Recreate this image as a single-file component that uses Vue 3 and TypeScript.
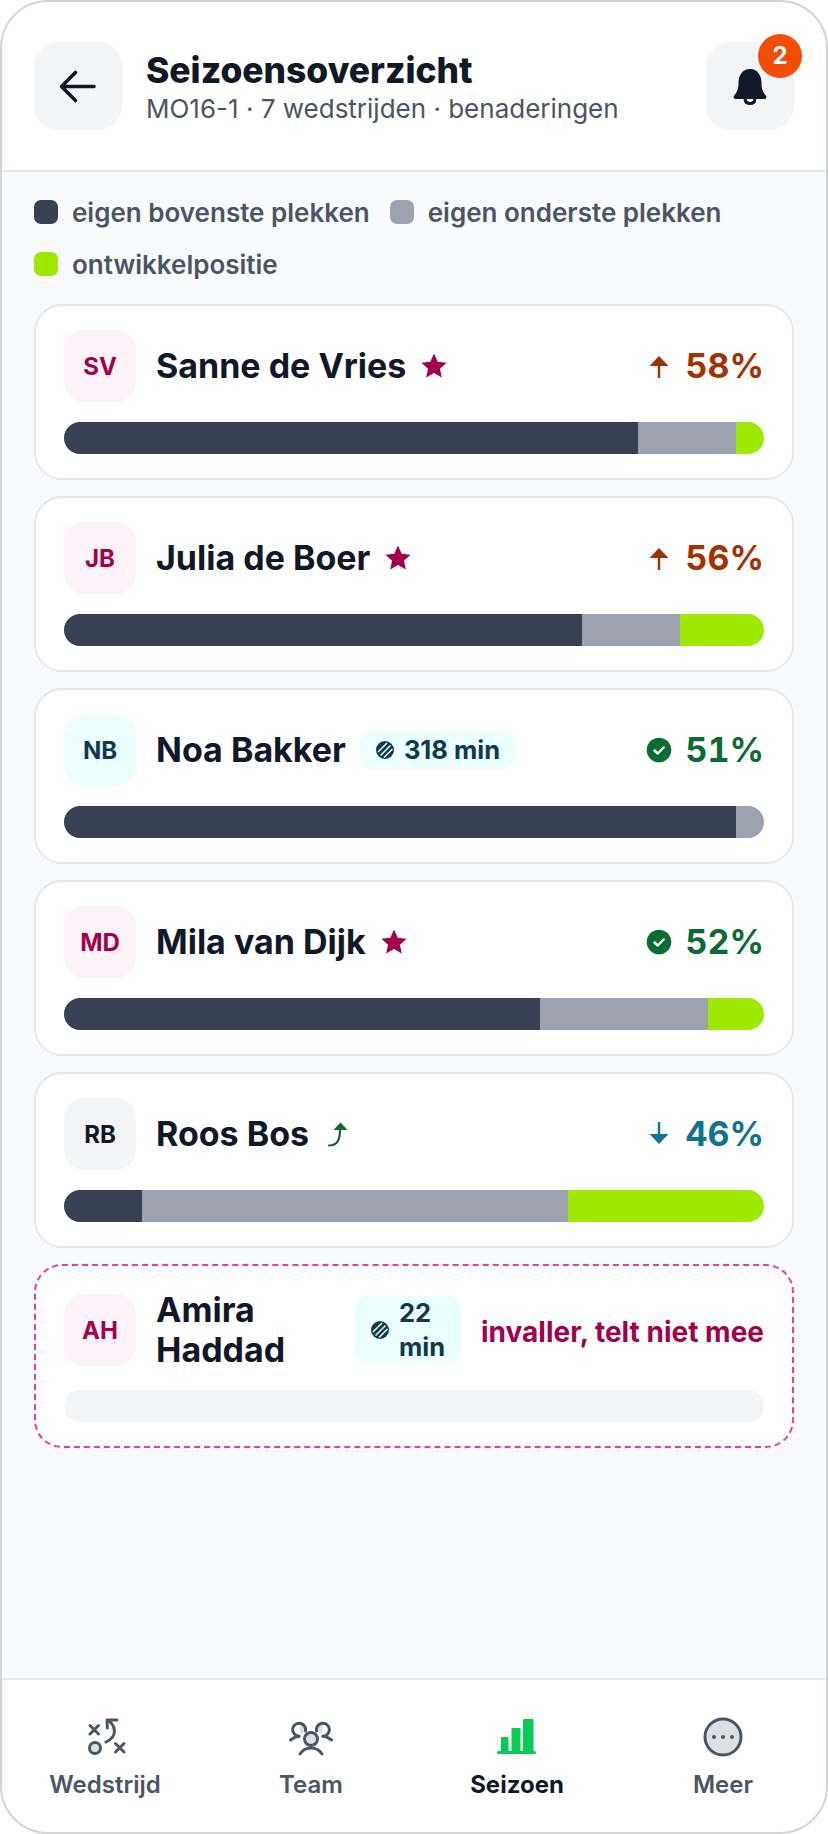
<script setup lang="ts">
interface Player {
  initials: string
  name: string
  tone: 'pink' | 'cyan' | 'grey'
  marker?: 'star' | 'rise'
  minutes?: string
  status?: 'up' | 'ok' | 'down'
  pct?: string
  note?: string
  bars: number[]
}

const players: Player[] = [
  { initials: 'SV', name: 'Sanne de Vries', tone: 'pink', marker: 'star', status: 'up', pct: '58%', bars: [82, 14, 4] },
  { initials: 'JB', name: 'Julia de Boer', tone: 'pink', marker: 'star', status: 'up', pct: '56%', bars: [74, 14, 12] },
  { initials: 'NB', name: 'Noa Bakker', tone: 'cyan', minutes: '318 min', status: 'ok', pct: '51%', bars: [96, 4, 0] },
  { initials: 'MD', name: 'Mila van Dijk', tone: 'pink', marker: 'star', status: 'ok', pct: '52%', bars: [68, 24, 8] },
  { initials: 'RB', name: 'Roos Bos', tone: 'grey', marker: 'rise', status: 'down', pct: '46%', bars: [11.2, 60.8, 28] },
  { initials: 'AH', name: 'Amira Haddad', tone: 'pink', minutes: '22 min', note: 'invaller, telt niet mee', bars: [] },
]

const legend = [
  { label: 'eigen bovenste plekken', color: '#374151' },
  { label: 'eigen onderste plekken', color: '#9ca3af' },
  { label: 'ontwikkelpositie', color: '#9ee800' },
]

const barColors = ['#374151', '#9ca3af', '#9ee800']
</script>

<template>
  <div class="phone">
    <header class="top">
      <button class="square">
        <svg width="40" height="40" viewBox="0 0 40 40" fill="none" stroke="#111827" stroke-width="3.6" stroke-linecap="round" stroke-linejoin="round">
          <path d="M36 20.5H4M17.5 6.5 3.500 20.500l14 14" />
        </svg>
      </button>
      <div class="titles">
        <h1>Seizoensoverzicht</h1>
        <p>MO16-1 · 7 wedstrijden · benaderingen</p>
      </div>
      <button class="square bell">
        <svg width="36" height="40" viewBox="0 0 36 40">
          <path fill="#111827" d="M18 2C10 2 6.500 9 6.500 16c0 6.500-2 10-4.500 12.800-.9 1.300 0 3.200 1.600 3.200h28.800c1.600 0 2.500-1.900 1.600-3.200-2.500-2.800-4.500-6.300-4.500-12.800C29.500 9 26 2 18 2Z" />
          <path fill="none" stroke="#111827" stroke-width="3" d="M13 32c.3 3 2.500 4.500 5 4.500s4.700-1.500 5-4.500" />
        </svg>
        <span class="badge">2</span>
      </button>
    </header>

    <main class="content">
      <div class="legend">
        <div v-for="item in legend" :key="item.label" class="legend-item">
          <span class="swatch" :style="{ background: item.color }"></span>
          <span>{{ item.label }}</span>
        </div>
      </div>

      <div class="list">
        <section v-for="p in players" :key="p.initials" class="card" :class="{ sub: p.note }">
          <div class="row">
            <div class="avatar" :class="p.tone">{{ p.initials }}</div>
            <div class="who">
              <span class="name">{{ p.name }}</span>
              <svg v-if="p.marker === 'star'" class="mark" width="28" height="28" viewBox="1 1 26 26">
                <path fill="#a3004c" d="M14 2.500l3.400 7.600 8.300.9-6.200 5.500 1.800 8.100L14 20.400l-7.300 4.200 1.800-8.100L2.300 11l8.300-.9Z" />
              </svg>
              <svg v-if="p.marker === 'rise'" class="mark" width="28" height="26" viewBox="-3 0 28 26">
                <path fill="none" stroke="#166534" stroke-width="2.200" stroke-linecap="round" d="M3 24.500c8-.3 11-5 11-16" />
                <path fill="#166534" d="M14.500 1.500 21.500 9h-14Z" />
              </svg>
              <span v-if="p.minutes" class="minutes">
                <svg class="ball" width="18" height="18" viewBox="0 0 18 18">
                  <circle cx="9" cy="9" r="9" fill="#0e3a4d" />
                  <path stroke="#ecfeff" stroke-width="1.500" d="M2 11 11 2M4.500 14.500 14.500 4.500M8 16.500 16.500 8" />
                </svg>
                <span>{{ p.minutes }}</span>
              </span>
            </div>
            <div v-if="p.note" class="note">{{ p.note }}</div>
            <div v-else class="score" :class="p.status">
              <svg v-if="p.status === 'ok'" width="26" height="26" viewBox="0 0 26 26">
                <circle cx="13" cy="13" r="12.300" fill="#0b6b33" />
                <path fill="none" stroke="#fff" stroke-width="2.400" stroke-linecap="round" stroke-linejoin="round" d="m8.500 13.500 3.200 3 6-6" />
              </svg>
              <svg v-else-if="p.status === 'up'" width="26" height="26" viewBox="0 0 26 26">
                <path fill="currentColor" d="M13 3 22.500 13h-8.300v12h-2.400V13H3.500Z" />
              </svg>
              <svg v-else width="26" height="26" viewBox="0 0 26 26">
                <path fill="currentColor" d="M13 23 22.500 13h-8.300V1h-2.400v12H3.500Z" />
              </svg>
              <span>{{ p.pct }}</span>
            </div>
          </div>
          <div class="bar">
            <span
              v-for="(b, i) in p.bars"
              :key="i"
              :style="{ width: b + '%', background: barColors[i] }"
            ></span>
          </div>
        </section>
      </div>
    </main>

    <nav class="tabs">
      <div class="tab">
        <svg width="48" height="48" viewBox="0 0 48 48" fill="none" stroke="#4b5563" stroke-width="3" stroke-linecap="round" stroke-linejoin="round">
          <circle cx="14" cy="35" r="5.500" fill="#dcdfe4" />
          <path d="M9 12.500l8.500 8.500M17.500 12.500 9 21M34.500 30.500l8.500 8.500M43 30.500 34.500 39" />
          <path d="M26 7c8 4 12 16-1 22M26 7h10M26 7l.3 8" />
        </svg>
        <span>Wedstrijd</span>
      </div>
      <div class="tab">
        <svg width="48" height="48" viewBox="0 0 48 48" fill="none" stroke="#4b5563" stroke-width="3" stroke-linecap="round" stroke-linejoin="round">
          <path fill="#dcdfe4" stroke="none" d="M12 10a6.500 6.500 0 0 1 6 9l-5 2Zm24 0a6.500 6.500 0 0 0-6 9l5 2Z" />
          <circle cx="24" cy="26" r="6.500" fill="#dcdfe4" />
          <path d="M13 41c5-8 17-8 22 0" />
          <path d="M3.500 27c3-2.500 5-3.500 8.500-3.800M44.500 27c-3-2.500-5-3.500-8.500-3.800" />
          <path d="M18.500 18a6.500 6.500 0 1 0-6.500 5.200M29.500 18a6.500 6.500 0 1 1 6.500 5.200" />
        </svg>
        <span>Team</span>
      </div>
      <div class="tab active">
        <svg width="48" height="48" viewBox="0 0 48 48" fill="#05cc55">
          <rect x="8" y="24" width="7.500" height="16" rx="1" />
          <rect x="18.500" y="15" width="9" height="25" rx="1" />
          <rect x="30" y="6" width="10.500" height="34" rx="1" />
          <rect x="4" y="38" width="39" height="3" rx="1.500" />
        </svg>
        <span>Seizoen</span>
      </div>
      <div class="tab">
        <svg width="48" height="48" viewBox="0 0 48 48">
          <circle cx="24" cy="24" r="18" fill="#dcdfe4" stroke="#4b5563" stroke-width="3" />
          <circle cx="15" cy="24" r="2" fill="#4b5563" />
          <circle cx="24" cy="24" r="2" fill="#4b5563" />
          <circle cx="33" cy="24" r="2" fill="#4b5563" />
        </svg>
        <span>Meer</span>
      </div>
    </nav>
  </div>
</template>

<style>
html, body {
  margin: 0;
  background: #fff;
}
</style>

<style scoped>
.phone {
  width: 828px;
  height: 1834px;
  box-sizing: border-box;
  border: 2px solid #d1d5db;
  border-radius: 48px;
  overflow: hidden;
  display: flex;
  flex-direction: column;
  background: #fff;
  font-family: Inter, "Liberation Sans", sans-serif;
  color: #111827;
}

.top {
  height: 170px;
  box-sizing: border-box;
  flex: none;
  display: flex;
  align-items: flex-start;
  padding: 40px 32px 0;
  gap: 24px;
  border-bottom: 2px solid #e5e7eb;
}

.square {
  width: 88px;
  height: 88px;
  flex: none;
  border: 0;
  padding: 0;
  border-radius: 24px;
  background: #f3f4f6;
  display: flex;
  align-items: center;
  justify-content: center;
  position: relative;
}

.bell svg {
  margin-top: 2px;
}

.badge {
  position: absolute;
  top: -8px;
  right: -8px;
  width: 44px;
  height: 44px;
  border-radius: 50%;
  background: #f24e07;
  color: #fff;
  font-size: 24px;
  font-weight: 700;
  line-height: 44px;
  text-align: center;
  font-family: Inter, sans-serif;
}

.titles {
  flex: 1;
  min-width: 0;
  padding-top: 9px;
}

h1 {
  margin: 0;
  font-size: 35.4px;
  font-weight: 800;
  line-height: 40px;
}

.titles p {
  margin: 0;
  font-size: 26px;
  line-height: 36px;
  color: #4b5563;
}

.content {
  flex: 1;
  background: #f9fafb;
  padding: 23px 32px 0;
}

.legend {
  display: flex;
  flex-wrap: wrap;
  gap: 16px 20px;
  font-size: 26px;
  font-weight: 600;
  line-height: 36px;
  color: #4b5563;
}

.legend-item {
  display: flex;
  align-items: center;
  gap: 14px;
}

.swatch {
  width: 24px;
  height: 24px;
  border-radius: 7px;
  margin-top: -2px;
}

.list {
  margin-top: 21px;
  display: flex;
  flex-direction: column;
  gap: 16px;
}

.card {
  border: 2px solid #e5e7eb;
  border-radius: 28px;
  background: #fff;
  padding: 24px 28px;
}

.card.sub {
  border: 2px dashed #ec3d8f;
}

.row {
  display: flex;
  align-items: center;
  gap: 20px;
  min-height: 72px;
}

.avatar {
  width: 72px;
  height: 72px;
  flex: none;
  border-radius: 20px;
  display: flex;
  align-items: center;
  justify-content: center;
  font-size: 24px;
  font-weight: 700;
}

.avatar.pink {
  background: #fdf2f8;
  color: #a3004c;
}

.avatar.cyan {
  background: #ecfeff;
  color: #0e3a4d;
}

.avatar.grey {
  background: #f3f4f6;
  color: #111827;
}

.who {
  flex: 1;
  min-width: 0;
  display: flex;
  align-items: center;
  gap: 14px;
}

.name {
  font-size: 34px;
  font-weight: 700;
  line-height: 40px;
}

.mark {
  flex: none;
}

.minutes {
  flex-shrink: 10;
  display: flex;
  align-items: center;
  gap: 10px;
  padding: 0 16px;
  min-height: 38px;
  border-radius: 14px;
  background: #ecfeff;
  color: #0e3a4d;
  font-size: 25.5px;
  font-weight: 700;
  line-height: 34px;
}

.ball {
  flex: none;
}

.score {
  flex: none;
  display: flex;
  align-items: center;
  gap: 14px;
  font-size: 34px;
  font-weight: 700;
  line-height: 40px;
  font-variant-numeric: tabular-nums;
}

.score.up {
  color: #a33200;
}

.score.ok {
  color: #0b6b33;
}

.score.down {
  color: #0e7490;
}

.note {
  flex: none;
  font-size: 28px;
  font-weight: 700;
  color: #a3004c;
  padding-top: 3px;
}

.bar {
  margin-top: 20px;
  height: 32px;
  border-radius: 16px;
  background: #f3f4f6;
  overflow: hidden;
  display: flex;
}

.bar span {
  display: block;
  height: 100%;
}

.tabs {
  height: 154px;
  box-sizing: border-box;
  flex: none;
  display: grid;
  grid-template-columns: repeat(4, 1fr);
  border-top: 2px solid #e5e7eb;
  padding-top: 33px;
}

.tab {
  display: flex;
  flex-direction: column;
  align-items: center;
  font-size: 24px;
  font-weight: 600;
  line-height: 32px;
  color: #4b5563;
  gap: 8px;
}

.tab.active {
  color: #111827;
  font-weight: 700;
}
</style>
